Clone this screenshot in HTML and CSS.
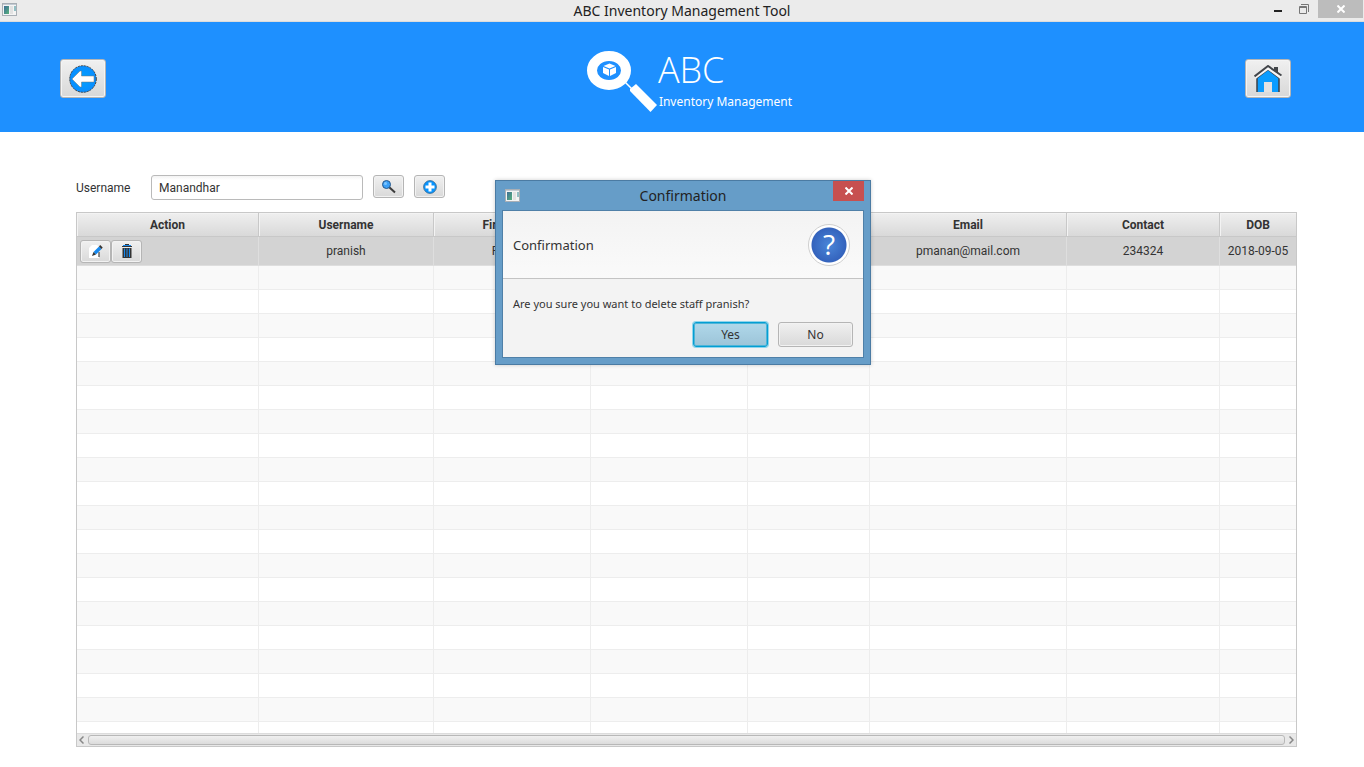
FILE: index.html
```html
<!DOCTYPE html>
<html lang="en">
<head>
<meta charset="utf-8">
<title>ABC Inventory Management Tool</title>
<link rel="stylesheet" href="styles.css">
</head>
<body>
<svg class="defs" aria-hidden="true">
  <defs>
    <linearGradient id="thumb" x2="1" y2="1"><stop offset="0" stop-color="#3d6d96"/><stop offset="1" stop-color="#58b27c"/></linearGradient>
    <radialGradient id="blue"><stop offset="0" stop-color="#00a2ff"/><stop offset="1" stop-color="#0a8dff"/></radialGradient>
    <symbol id="app" viewBox="0 0 16 14">
      <rect x=".5" y=".5" width="14" height="12" fill="#f4f4f4" stroke="#a9afb5"/>
      <path d="M1 1.5h13" stroke="#c3cbd3"/>
      <rect x="2" y="3" width="5" height="8" fill="url(#thumb)"/>
      <rect x="8" y="3" width="3" height="8" fill="#e2e2e2"/>
      <rect x="12" y="3" width="2" height="5" fill="#93bfc4"/>
    </symbol>
  </defs>
</svg>
<div class="window">
  <div class="titlebar">
    <svg class="app-icon" width="16" height="14"><use href="#app"/></svg>
    <span class="window-title">ABC Inventory Management Tool</span>
    <div class="window-controls">
      <button class="control" aria-label="Minimize"><svg width="8" height="2"><path d="M0 1h8" stroke="#222" stroke-width="2"/></svg></button>
      <button class="control" aria-label="Restore"><svg width="10" height="10" fill="none" stroke="#777"><path d="M2 .5h7.5V8"/><path d="M.5 2.500h7v7h-7zM0 3.500h8"/></svg></button>
      <button class="control control-close" aria-label="Close"><svg width="8" height="8"><path d="M0.5 0.5l7 7M7.5 0.5l-7 7" stroke="#fff" stroke-width="2"/></svg></button>
    </div>
  </div>

  <header class="banner">
    <button class="nav-button" aria-label="Back">
      <svg width="28" height="28" viewBox="0 0 28 28"><circle cx="14" cy="14" r="13.3" fill="url(#blue)" stroke="#444" stroke-width="1" stroke-dasharray="2 1"/><path d="M3 14l8-8h1.500v5H25v6H12.500v5H11z" fill="#fff" stroke="#777" stroke-width=".5"/></svg>
    </button>
    <div class="brand">
      <svg class="brand-mark" width="71" height="62" viewBox="0 0 71 62">
        <ellipse cx="22" cy="19.500" rx="17" ry="14.500" fill="none" stroke="#fff" stroke-width="10"/>
        <path d="M38 31l7 7" stroke="#fff" stroke-width="1.500"/>
        <path d="M49 33L70 54L63.500 61L43 40V38z" fill="#fff"/>
        <path d="M22.500 12.500l6 2.500-6 2.500-6-2.500zM16 16l6 2.500v6.500l-6-3zM29 16l-6 2.500v6.500l6-3z" fill="#fff"/>
      </svg>
      <div class="brand-text">
        <span class="brand-name">ABC</span>
        <span class="brand-tag">Inventory Management</span>
      </div>
    </div>
    <button class="nav-button" aria-label="Home">
      <svg width="28" height="28" viewBox="0 0 28 28"><path d="M3 27V13L14 4.500 25 13v14h-7V17h-8v10z" fill="#0a9cff"/><path d="M3 27V13L14 4.500 25 13v14" fill="none" stroke="#3d4248" stroke-width="1.500"/><path d="M10 27V17h8v10z" fill="#e2e2e2"/><path d="M1 12.500L14 3 27 12.500" fill="none" stroke="#f6f6f6" stroke-width="3"/><path d="M20 2h4v6l-4-3z" fill="#43464a"/><path d="M.500 11.500L14 1l13.500 9.500" fill="none" stroke="#43464a" stroke-width="2"/></svg>
    </button>
  </header>

  <main class="content">
    <form class="search">
      <label class="search-label" for="username">Username</label>
      <input class="search-input" id="username" type="text" value="Manandhar">
      <button class="tool-button" type="button" aria-label="Search">
        <svg width="14" height="14" viewBox="0 0 14 14"><path d="M7 7l6 5.500" stroke="#3c3c3c" stroke-width="2"/><circle cx="4.500" cy="4.500" r="4" fill="#3ba0f8" stroke="#28588a"/><circle cx="3.500" cy="3.500" r="1.500" fill="#7cc5ff"/></svg>
      </button>
      <button class="tool-button" type="button" aria-label="Add">
        <svg width="14" height="14" viewBox="0 0 14 14"><circle cx="7" cy="7" r="6.400" fill="#0794ff" stroke="#39668c" stroke-width=".8"/><path d="M7 2.500v9M2.500 7h9" stroke="#fff" stroke-width="3"/></svg>
      </button>
    </form>

    <div class="grid">
      <div class="grid-view">
        <table class="staff">
          <colgroup><col class="c-action"><col class="c-user"><col class="c-name"><col class="c-name"><col class="c-mid"><col class="c-email"><col class="c-contact"><col class="c-dob"></colgroup>
          <thead><tr><th>Action</th><th>Username</th><th>First Name</th><th></th><th></th><th>Email</th><th>Contact</th><th>DOB</th></tr></thead>
          <tbody>
            <tr class="selected">
              <td class="actions"><div class="action-set">
                <button class="tool-button" aria-label="Edit"><svg width="14" height="14" viewBox="0 0 14 14"><path d="M3 1h5l2 2v11H0V4z" fill="#fff"/><path d="M10 8v5" stroke="#444" stroke-width="1.200"/><path d="M4.500 8L10 2.500l2.500 2.500L7 10.500z" fill="#1688ee"/><path d="M10 2.500l1.200-1.500 2.500 2.500L12.500 5z" fill="#333"/><path d="M4.500 8L3 12l4-1.500z" fill="#333"/></svg></button>
                <button class="tool-button" aria-label="Delete"><svg width="10" height="14" viewBox="0 0 10 14"><path d="M3 .5h4M0 2.500h10" stroke="#333"/><path d="M1 1.500h8" stroke="#1688ee"/><path d="M.500 4h9v10h-9z" fill="#333"/><path d="M2.500 4.500V13M5 4.500V13M7.500 4.500V13" stroke="#1688ee"/></svg></button>
              </div></td>
              <td>pranish</td><td>Pranish</td><td></td><td></td><td>pmanan@mail.com</td><td>234324</td><td>2018-09-05</td>
            </tr>
            <tr><td></td><td></td><td></td><td></td><td></td><td></td><td></td><td></td></tr>
            <tr><td></td><td></td><td></td><td></td><td></td><td></td><td></td><td></td></tr>
            <tr><td></td><td></td><td></td><td></td><td></td><td></td><td></td><td></td></tr>
            <tr><td></td><td></td><td></td><td></td><td></td><td></td><td></td><td></td></tr>
            <tr><td></td><td></td><td></td><td></td><td></td><td></td><td></td><td></td></tr>
            <tr><td></td><td></td><td></td><td></td><td></td><td></td><td></td><td></td></tr>
            <tr><td></td><td></td><td></td><td></td><td></td><td></td><td></td><td></td></tr>
            <tr><td></td><td></td><td></td><td></td><td></td><td></td><td></td><td></td></tr>
            <tr><td></td><td></td><td></td><td></td><td></td><td></td><td></td><td></td></tr>
            <tr><td></td><td></td><td></td><td></td><td></td><td></td><td></td><td></td></tr>
            <tr><td></td><td></td><td></td><td></td><td></td><td></td><td></td><td></td></tr>
            <tr><td></td><td></td><td></td><td></td><td></td><td></td><td></td><td></td></tr>
            <tr><td></td><td></td><td></td><td></td><td></td><td></td><td></td><td></td></tr>
            <tr><td></td><td></td><td></td><td></td><td></td><td></td><td></td><td></td></tr>
            <tr><td></td><td></td><td></td><td></td><td></td><td></td><td></td><td></td></tr>
            <tr><td></td><td></td><td></td><td></td><td></td><td></td><td></td><td></td></tr>
            <tr><td></td><td></td><td></td><td></td><td></td><td></td><td></td><td></td></tr>
            <tr><td></td><td></td><td></td><td></td><td></td><td></td><td></td><td></td></tr>
            <tr><td></td><td></td><td></td><td></td><td></td><td></td><td></td><td></td></tr>
            <tr class="last"><td></td><td></td><td></td><td></td><td></td><td></td><td></td><td></td></tr>
          </tbody>
        </table>
      </div>
      <div class="scrollbar">
        <svg width="5" height="8"><path d="M4.500 .5L1 4l3.500 3.500" fill="none" stroke="#888" stroke-width="1.500"/></svg>
        <div class="scroll-thumb"></div>
        <svg width="5" height="8"><path d="M.5 .5L4 4 .5 7.500" fill="none" stroke="#888" stroke-width="1.500"/></svg>
      </div>
    </div>
  </main>

  <section class="dialog" role="dialog" aria-labelledby="dialog-title">
    <div class="dialog-bar">
      <svg class="app-icon" width="16" height="14"><use href="#app"/></svg>
      <span class="dialog-title" id="dialog-title">Confirmation</span>
      <button class="dialog-close" aria-label="Close"><svg width="8" height="8"><path d="M.5 .5l7 7M7.500 .5l-7 7" stroke="#fff" stroke-width="2"/></svg></button>
    </div>
    <div class="dialog-panel">
      <div class="dialog-head">
        <span>Confirmation</span>
        <span class="help">?</span>
      </div>
      <div class="dialog-body">
        <p class="dialog-message">Are you sure you want to delete staff pranish?</p>
        <div class="dialog-actions">
          <button class="dialog-button primary">Yes</button>
          <button class="dialog-button">No</button>
        </div>
      </div>
    </div>
  </section>
</div>
</body>
</html>
```

FILE: styles.css
```css
* { box-sizing: border-box; }
body { margin: 0; background: #fff; color: #333; font: 12px/16px Roboto, sans-serif; }
button { font: inherit; color: inherit; padding: 0; margin: 0; border: 0; background: none; }
svg { display: block; flex: none; }
.defs { position: absolute; width: 0; height: 0; }
.window { position: relative; min-height: 100vh; display: flex; flex-direction: column; }

.titlebar {
  display: grid;
  grid-template-columns: 1fr auto 1fr;
  height: 22px;
  background: #ebebeb;
  border-bottom: 1px solid #dcdcdc;
}
.app-icon { margin: 3px 2px; }
.window-title { font: 14px/21px "Noto Sans", sans-serif; color: #222; }
.window-controls { display: flex; justify-content: flex-end; }
.control { width: 26px; height: 18px; display: flex; align-items: center; justify-content: center; }
.control:first-child { align-items: flex-end; padding-bottom: 6px; }
.control-close { width: 45px; margin-left: 1px; margin-right: 1px; background: #bcbcbc; }

.banner {
  display: grid;
  grid-template-columns: 1fr auto 1fr;
  align-items: center;
  height: 110px;
  padding: 3px 73px 0 60px;
  background: #1e90ff;
}
.nav-button {
  display: flex;
  align-items: center;
  justify-content: center;
  width: 46px;
  height: 39px;
  border: 1px solid #b5b5b5;
  border-radius: 3px;
  background: linear-gradient(#f0f0f0, #d8d8d8);
  box-shadow: inset 0 0 0 1px #f4f4f4;
}
.nav-button:last-child { justify-self: end; }
.brand { display: flex; padding: 6px 0 0 28px; }
.brand-text { display: flex; flex-direction: column; color: #fff; }
.brand-name { font: 300 36px/38px "Open Sans", sans-serif; }
.brand-tag { font: 12px/18px "Noto Sans", sans-serif; padding: 4px 0 0 1px; }

.content { flex: 1; display: flex; flex-direction: column; padding: 43px 67px 20px 76px; }
.search { display: flex; align-items: flex-start; height: 25px; }
.search-label { width: 75px; line-height: 26px; }
.search-input {
  width: 212px;
  height: 25px;
  padding: 0 7px;
  border: 1px solid #bababa;
  border-radius: 3px;
  background: linear-gradient(#f3f3f3, #fff 4px);
  font: inherit;
  color: inherit;
}
.tool-button {
  display: flex;
  align-items: center;
  justify-content: center;
  width: 31px;
  height: 23px;
  border: 1px solid #b5b5b5;
  border-radius: 3px;
  background: linear-gradient(#f0f0f0, #d9d9d9);
  box-shadow: inset 0 0 0 1px #f2f2f2;
}
.search .tool-button { margin-left: 10px; }

.grid { flex: 1; display: flex; flex-direction: column; margin-top: 12px; border: 1px solid #c8c8c8; }
.grid-view { flex: 1; }
.staff { width: 100%; table-layout: fixed; border-collapse: separate; border-spacing: 0; text-align: center; }
.c-action { width: 182px; }
.c-user { width: 175px; }
.c-name { width: 157px; }
.c-mid { width: 122px; }
.c-email { width: 197px; }
.c-contact { width: 153px; }
.c-dob { width: 76px; }
.staff th {
  height: 24px;
  padding: 0;
  font-weight: 700;
  border-right: 1px solid #c8c8c8;
  border-bottom: 1px solid #c8c8c8;
  background: linear-gradient(#efefef, #d9d9d9);
  box-shadow: inset 1px 1px 0 #f3f3f3;
}
.staff td { height: 24px; padding: 0; border-right: 1px solid #ededed; border-bottom: 1px solid #ededed; }
.staff th:last-child, .staff td:last-child { border-right: 0; }
.staff tr:nth-child(even) td { background: #f9f9f9; }
.staff .selected td { height: 29px; background: #d3d3d3; border-color: #dedede; }
.staff .last td { height: 11px; border-bottom: 0; }
.action-set { display: flex; padding-left: 3px; }

.scrollbar {
  display: flex;
  align-items: center;
  gap: 4px;
  height: 13px;
  padding: 0 2px;
  border-top: 1px solid #dcdcdc;
  background: #e8e8e8;
}
.scroll-thumb {
  flex: 1;
  height: 10px;
  border: 1px solid #b8b8b8;
  border-radius: 3px;
  background: linear-gradient(#f0f0f0, #dcdcdc);
}

.dialog {
  position: absolute;
  top: 180px;
  left: calc(50% - 187px);
  width: 376px;
  padding: 0 7px 6px;
  border: 1px solid #4b7ba3;
  background: #669dc8;
  box-shadow: 0 0 4px rgba(0, 0, 0, .2);
  font-family: "Noto Sans", sans-serif;
}
.dialog-bar { display: grid; grid-template-columns: 1fr auto 1fr; height: 29px; }
.dialog-bar .app-icon { margin-top: 8px; }
.dialog-title { font-size: 14px; line-height: 30px; color: #222; }
.dialog-close {
  justify-self: end;
  display: flex;
  align-items: center;
  justify-content: center;
  width: 31px;
  height: 20px;
  margin-right: -1px;
  background: #c75050;
}
.dialog-panel { border: 1px solid #4f80a8; margin: 0 -1px; background: #f3f3f3; }
.dialog-head {
  display: flex;
  align-items: center;
  justify-content: space-between;
  height: 68px;
  padding: 0 13px 0 10px;
  border-bottom: 1px solid #c4c4c4;
  background: linear-gradient(#f3f3f3, #fafafa);
  font-size: 13px;
}
.help {
  width: 42px;
  height: 42px;
  border: 1px solid #cfcfcf;
  border-radius: 50%;
  background: radial-gradient(circle, #4a86d8 0, #3463bd 17px, #fff 18px);
  color: #fff;
  font-family: "Open Sans", sans-serif;
  font-size: 28px;
  line-height: 38px;
  text-align: center;
}
.dialog-body { padding: 17px 10px 10px; font-size: 11px; }
.dialog-message { margin: 0 0 10px; }
.dialog-actions { display: flex; justify-content: flex-end; gap: 10px; }
.dialog-button {
  width: 75px;
  height: 25px;
  border: 1px solid #b5b5b5;
  border-radius: 3px;
  background: linear-gradient(#f0f0f0, #d9d9d9);
  box-shadow: inset 0 0 0 1px #f2f2f2;
  font-size: 12px;
}
.dialog-button.primary {
  border-color: #039ed3;
  background: linear-gradient(#b0d8ea, #9cc4d8);
  box-shadow: 0 0 0 1px #8fd5ec, inset 0 0 0 1px #4db5d8;
}
```
